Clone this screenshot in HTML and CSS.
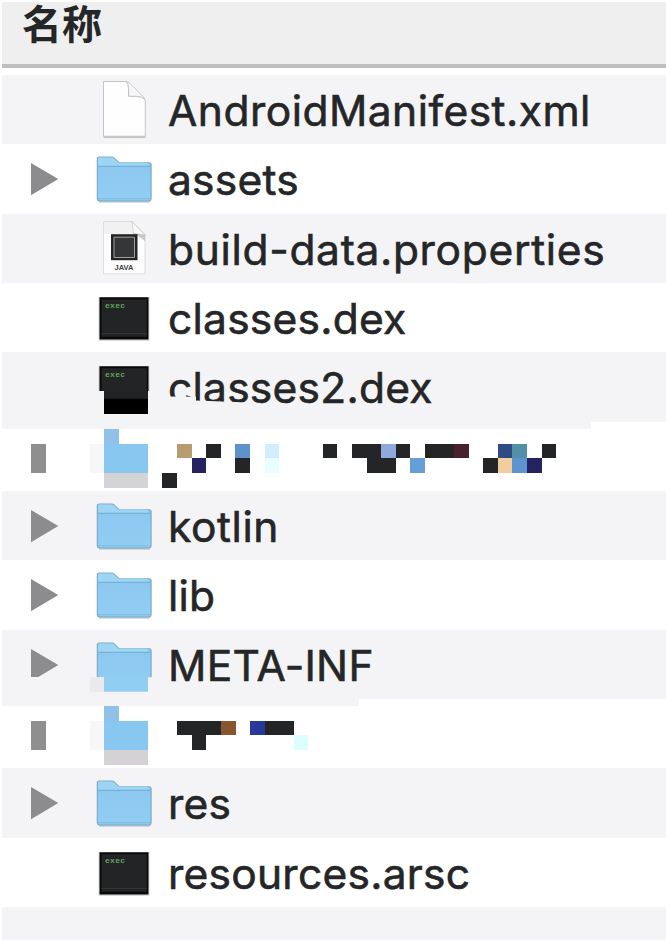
FILE: index.html
```
<!DOCTYPE html>
<html lang="zh-CN">
<head>
<meta charset="utf-8">
<title>名称</title>
<link rel="stylesheet" href="styles.css">
</head>
<body>
<svg class="defs" width="0" height="0" aria-hidden="true">
  <defs>
    <linearGradient id="blue" x1="0" y1="0" x2="0" y2="1"><stop offset="0" stop-color="#8ac7ef"/><stop offset="1" stop-color="#92cdf3"/></linearGradient>
    <symbol id="arrow" viewBox="0 0 88 69.35"><path d="M29 19v32.3L56.300 35.100z" fill="#8c8c8e"/></symbol>
    <symbol id="folder" viewBox="0 0 70 69.35">
      <path d="M9 57.8h51" stroke="#557080" stroke-opacity=".3" stroke-width="2"/>
      <path d="M7.3 15q0-2 2-2h12q2 0 3.300 1.300l3.500 3.500q1 1 3 1h28q2 0 2 2v33.700q0 2.500-2.500 2.500h-48.800q-2.500 0-2.500-2.500z" fill="url(#blue)" stroke="#75a9c8" stroke-width="1.100"/>
      <path d="M8 15q0-1.400 1.500-1.400h11.500q2 0 3 1l4 4h28.500q1.800 0 1.800 2v1.400H8z" fill="#9ed5f4"/>
      <path d="M7.500 22.300h53" stroke="#73abcf"/>
      <path d="M8 54.800h52" stroke="#73acd0" stroke-opacity=".6"/>
    </symbol>
    <symbol id="terminal" viewBox="0 0 70 69.35">
      <path d="M8.500 14h51v44h-51z" fill="#000" opacity=".14"/>
      <path d="M9.500 14.200h49v42.300h-49z" fill="#080909"/>
      <path d="M11.500 16.200h45.300v37.600H11.500z" fill="#232425"/>
      <path d="M11.500 50.500h45" stroke="#3b3b3c" stroke-width=".7"/>
      <text x="15" y="25.500" class="exec" textLength="20">exec</text>
    </symbol>
  </defs>
</svg>
<main class="list">
  <header class="head">名称</header>
  <div class="row stripe">
    <span></span>
    <svg class="icon" viewBox="0 0 70 69.35"><path d="M13.500 62h42" stroke="#888" stroke-opacity=".45" stroke-width="2"/><path d="M13.500 6.500H35q3 0 5 2l13 13q2.300 2.200 2.300 5v34.700H13.500z" fill="#fefefe" stroke="#c3c4c5"/><path d="M36 6.500q2.600 2 2.600 8v6.800h7.500q6 0 8.500 3" fill="#f6f6f6" stroke="#bcbdbe"/></svg>
    <span class="name n-manifest">AndroidManifest.xml</span>
  </div>
  <div class="row">
    <svg class="arrow"><use href="#arrow"/></svg>
    <svg class="icon"><use href="#folder"/></svg>
    <span class="name">assets</span>
  </div>
  <div class="row stripe">
    <span></span>
    <svg class="icon" viewBox="0 0 70 69.35"><path d="M13.500 7.500h28.500l13 13v39.300H13.500z" fill="#fdfdfd" stroke="#dddddf"/><path d="M14 8h28v12H14z" fill="#f1f1f1"/><path d="M42 7.500 43.500 20l12 1.500z" fill="#f9f9f9" stroke="#c6c6c7" stroke-width=".8"/><path d="M42 18.500l13 2.500v6l-7-5z" fill="#b7b7b8" opacity=".7"/><path d="M21 20.200h26.500v26H21z" fill="#222324"/><path d="M24 23.200h20.500v20.300H24z" fill="#343637" stroke="#a0a1a2"/><text x="24.500" y="56.500" class="java" textLength="19" lengthAdjust="spacingAndGlyphs">JAVA</text></svg>
    <span class="name n-build">build-data.properties</span>
  </div>
  <div class="row">
    <span></span>
    <svg class="icon"><use href="#terminal"/></svg>
    <span class="name">classes.dex</span>
  </div>
  <div class="row stripe">
    <span></span>
    <svg class="icon" viewBox="0 0 70 69.35"><use href="#terminal" width="70" height="69.35"/><path d="M6 39h8v20H6zM58 39h4v20h-4zM13 56h46v5H13z" fill="#f4f4f5"/><path d="M14 39h44v8H14z" fill="#222324"/><path d="M14 46.800h44v15.300H14z" fill="#000"/></svg>
    <span class="name cut">classes2.dex</span>
  </div>
  <div class="row">
    <svg class="mosaic" viewBox="2 421.75 664 69.35" shape-rendering="crispEdges" aria-hidden="true">
      <path d="M2 421h589v8H2z" fill="#f4f4f6"/>
      <path d="M31 443.400h14.700v29.200H31z" fill="#8f8f90"/>
      <path d="M90 443.400h14v29.200H90z" fill="#f7f7f9"/>
      <path d="M104 429h14.700v14.700H104z" fill="#91c1e8"/><path d="M104 443.400h43.700v29.200H104z" fill="#88c7ef"/><path d="M104 472.600h43.700v14.700H104z" fill="#d4d4d7"/>
      <path d="M162.300 472.600h14.700v14.700h-14.700zM206 443.400h14.700V458H206zM235.300 458H250v14.600h-14.700zM322.700 443.400h14.700V458h-14.700zM352.300 443.400h29V458H396v14.600h-29.300V458h-14.400zM396 443.400h14.500V458H396zM425 443.400h29.300V458H425zM483.300 458H498v14.600h-14.700zM542 443.400h14.500V458H542z" fill="#242526"/>
      <path d="M177 443.400h14.500V458H177z" fill="#b99b70"/><path d="M191.500 458H206v14.600h-14.500zM527 458h14.800v14.600H527z" fill="#262362"/>
      <path d="M235.300 443.400H250V458h-14.700z" fill="#5f91cb"/><path d="M265 443.400h14V458h-14z" fill="#cfefff"/><path d="M265 458h14v14.600h-14z" fill="#e8feff"/>
      <path d="M381.300 443.400H396V458h-14.700z" fill="#8fa9dc"/><path d="M410.500 458H425v14.600h-14.500z" fill="#669ed8"/><path d="M454.300 443.400h14.400V458h-14.400z" fill="#49202d"/>
      <path d="M498 443.400h14.500V458H498z" fill="#2d4c86"/><path d="M512.500 443.400H527V458h-14.500z" fill="#5090a8"/><path d="M498 458h14.500v14.600H498z" fill="#f2ce9e"/><path d="M512.500 458H527v14.600h-14.500z" fill="#5b94d0"/>
    </svg>
  </div>
  <div class="row stripe">
    <svg class="arrow"><use href="#arrow"/></svg>
    <svg class="icon"><use href="#folder"/></svg>
    <span class="name n-kotlin">kotlin</span>
  </div>
  <div class="row">
    <svg class="arrow"><use href="#arrow"/></svg>
    <svg class="icon"><use href="#folder"/></svg>
    <span class="name">lib</span>
  </div>
  <div class="row stripe">
    <svg class="arrow trimmed"><use href="#arrow"/></svg>
    <svg class="icon" viewBox="0 0 70 69.35"><use href="#folder" width="70" height="69.35"/><path d="M5 47.200h9v15H5zM58 47.200h5v15h-5z" fill="#f4f4f6"/><path d="M0 47.200h14v14.600H0z" fill="#ece9ed"/><path d="M14 47.200h44v14.600H14z" fill="#91cef3"/></svg>
    <span class="name">META-INF</span>
  </div>
  <div class="row">
    <svg class="mosaic" viewBox="2 699.15 664 69.35" shape-rendering="crispEdges" aria-hidden="true">
      <path d="M2 699h357v7H2z" fill="#f4f4f6"/>
      <path d="M31 721h14.700v29.300H31z" fill="#8f8f90"/>
      <path d="M90 721h14v29.300H90z" fill="#f7f7f9"/>
      <path d="M104 706.300h14.700V721H104z" fill="#91c1e8"/><path d="M104 721h43.700v29.300H104z" fill="#88c7ef"/><path d="M104 750.300h43.700V765H104z" fill="#d4d2d4"/>
      <path d="M177 721h44v14.500h-15v14.800h-14.500v-14.800H177zM264.700 721h29v14.500h-29z" fill="#242526"/>
      <path d="M221 721h14.500v14.500H221z" fill="#87562f"/><path d="M250 721h14.700v14.500H250z" fill="#27399b"/><path d="M293.700 735.500h14.600v14.800h-14.600z" fill="#dcfeff"/>
    </svg>
  </div>
  <div class="row stripe">
    <svg class="arrow"><use href="#arrow"/></svg>
    <svg class="icon"><use href="#folder"/></svg>
    <span class="name">res</span>
  </div>
  <div class="row">
    <span></span>
    <svg class="icon"><use href="#terminal"/></svg>
    <span class="name">resources.arsc</span>
  </div>
  <div class="row stripe last"></div>
</main>
</body>
</html>
```
FILE: styles.css
```
body {
  margin: 0;
  background: #fff;
}

.defs {
  display: block;
}

.list {
  display: flex;
  flex-direction: column;
  height: 938px;
  padding: 2px 0 2px 2px;
  color: #252628;
  font-family: Inter, "Noto Sans CJK SC", sans-serif;
}

.head {
  box-sizing: border-box;
  flex: none;
  height: 66px;
  margin-bottom: 7px;
  padding-left: 20px;
  border-bottom: 4px solid #bdbebe;
  background: #eeefee;
  font: 700 40px/41px "Noto Sans CJK SC", sans-serif;
}

.row {
  display: grid;
  grid-template-columns: 88px 70px 1fr;
  flex: none;
  height: 69.35px;
}

.stripe {
  background: #f4f4f6;
}

.last {
  flex: 1 1 0;
  height: auto;
}

.arrow,
.icon {
  display: block;
  width: 100%;
  height: 69.35px;
}

.trimmed {
  clip-path: inset(0 0 22px 0);
}

.name {
  padding: 1px 0 0 8px;
  font-size: 42.5px;
  line-height: 69px;
  letter-spacing: 0.25px;
  white-space: nowrap;
  -webkit-text-stroke: 0.6px #252628;
}

.n-manifest {
  letter-spacing: 0.48px;
}

.n-build {
  letter-spacing: 0.68px;
}

.n-kotlin {
  letter-spacing: 0.6px;
}

.cut {
  clip-path: polygon(0 0, 100% 0, 100% 100%, 90px 100%, 90px 50px, 62px 49px, 36px 48px, 36px 44px, 0 44px);
}

.mosaic {
  display: block;
  grid-column: 1 / -1;
  width: 664px;
  height: 69.35px;
}

.exec {
  fill: #63a35c;
  font: 700 8px "Liberation Mono", monospace;
}

.java {
  fill: #444;
  font: 700 7px "Liberation Sans", sans-serif;
}
```
